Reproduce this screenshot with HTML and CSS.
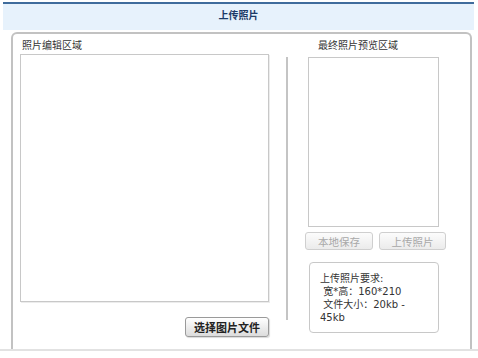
FILE: index.html
```html
<!DOCTYPE html>
<html lang="zh-CN">

<head>
  <meta charset="UTF-8" />
  <meta name="viewport" content="width=device-width, initial-scale=1.0" />
  <title>上传照片</title>
  <link rel="stylesheet" href="styles.css">
</head>

<body>
  <div class="page">
    <div class="header">上传照片</div>

    <div class="panel">
      <div class="edit-col">
        <div class="label">照片编辑区域</div>
        <div class="edit-area"></div>
        <button class="btn-choose">选择图片文件</button>
      </div>

      <div class="divider"></div>

      <div class="preview-col">
        <div class="label preview-label">最终照片预览区域</div>
        <div class="preview-area"></div>
        <div class="btn-row">
          <button class="btn-disabled btn-save" disabled>本地保存</button>
          <button class="btn-disabled btn-upload" disabled>上传照片</button>
        </div>
        <div class="require">
          上传照片要求:<br>
          &nbsp;宽*高：160*210<br>
          &nbsp;文件大小：20kb - 45kb
        </div>
      </div>
    </div>
  </div>
  <div class="bottom-line"></div>
</body>

</html>
```

FILE: styles.css
```css
:root {
  --header-bg: #e7f2fc;
  --header-line: #3f6c9c;
  --title: #1c3a68;
  --border: #c2c2c2;
  --text: #333333;
}

* {
  margin: 0;
  padding: 0;
  box-sizing: border-box;
  font-family: "DejaVu Sans", "Noto Sans CJK SC", sans-serif;
}

body {
  background: #ffffff;
  width: 478px;
  height: 358px;
  overflow: hidden;
}

.page {
  padding: 2px 4px 0 3px;
}

.header {
  height: 28px;
  border-top: 2px solid var(--header-line);
  background: var(--header-bg);
  color: var(--title);
  font-size: 10px;
  font-weight: 700;
  line-height: 24px;
  text-align: center;
}

.panel {
  display: flex;
  height: 317px;
  margin: 2px 2px 0 8px;
  padding: 3px 0 0 7px;
  border: 2px solid var(--border);
  border-bottom: none;
  border-radius: 6px 6px 0 0;
}

.label {
  height: 17px;
  padding-left: 2px;
  color: var(--text);
  font-size: 10px;
  line-height: 17px;
}

.edit-col {
  display: flex;
  flex-direction: column;
  width: 249px;
}

.edit-area {
  height: 248px;
  border: 1px solid #c8c8c8;
  box-shadow: 1px 1px 0 #ececec;
}

.btn-choose {
  align-self: flex-end;
  width: 84px;
  height: 20px;
  margin-top: 15px;
  border: 1px solid #9a9a9a;
  border-radius: 3px;
  background: linear-gradient(#ffffff, #dcdcdc);
  box-shadow: 1px 1px 1px rgba(0, 0, 0, 0.15);
  color: #222;
  font-size: 11px;
  font-weight: 700;
}

.divider {
  width: 2px;
  height: 263px;
  margin: 20px 0 0 17px;
  background: #c4c4c4;
}

.preview-col {
  display: flex;
  flex-direction: column;
  margin-left: 17px;
}

.preview-label {
  padding-left: 13px;
}

.preview-area {
  width: 131px;
  height: 170px;
  margin: 3px 0 0 3px;
  border: 1px solid #c8c8c8;
}

.btn-row {
  display: flex;
  gap: 6px;
  margin-top: 5px;
}

.btn-disabled {
  height: 18px;
  border: 1px solid #cfcfcf;
  border-radius: 3px;
  background: linear-gradient(#fcfcfc, #ebebeb);
  color: #a8a8a8;
  font-size: 10.5px;
}

.btn-save {
  width: 68px;
}

.btn-upload {
  width: 67px;
}

.require {
  width: 130px;
  height: 71px;
  margin: 12px 0 0 4px;
  padding: 9px 14px 0 10px;
  border: 1px solid #c8c8c8;
  border-radius: 4px;
  color: var(--text);
  font-size: 10px;
  line-height: 13px;
}

.bottom-line {
  height: 2px;
  background: #e2e2e2;
}
```
